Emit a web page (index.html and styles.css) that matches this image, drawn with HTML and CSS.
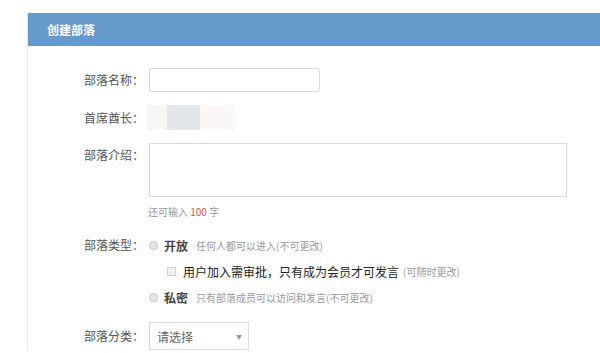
FILE: index.html
```html
<!DOCTYPE html>
<html lang="zh-CN">
<head>
    <meta charset="UTF-8">
    <meta name="viewport" content="width=device-width, initial-scale=1.0">
    <title>创建部落</title>
    <link rel="stylesheet" href="styles.css">
</head>
<body>
    <div class="panel">
        <div class="panel-head">创建部落</div>

        <div class="panel-body">
            <div class="form-row">
                <label class="form-label" for="name">部落名称：</label>
                <input type="text" id="name" class="text-input">
            </div>

            <div class="form-row row-chief">
                <span class="form-label">首席酋长：</span>
                <div class="chief">
                    <span class="chief-avatar"></span>
                </div>
            </div>

            <div class="form-row row-top row-intro">
                <label class="form-label" for="intro">部落介绍：</label>
                <textarea id="intro" class="text-area"></textarea>
            </div>
            <div class="counter">还可输入 <em>100</em> 字</div>

            <div class="form-row row-top row-type">
                <span class="form-label tall">部落类型：</span>
                <div class="options">
                    <div class="option">
                        <span class="radio"></span>
                        <b>开放</b>
                        <span class="hint">任何人都可以进入(不可更改)</span>
                    </div>
                    <div class="option sub-option">
                        <span class="checkbox"></span>
                        <span class="strong">用户加入需审批，只有成为会员才可发言</span>
                        <span class="hint">(可随时更改)</span>
                    </div>
                    <div class="option">
                        <span class="radio"></span>
                        <b>私密</b>
                        <span class="hint">只有部落成员可以访问和发言(不可更改)</span>
                    </div>
                </div>
            </div>

            <div class="form-row row-category">
                <span class="form-label">部落分类：</span>
                <div class="select">
                    <span>请选择</span>
                    <span class="arrow">▼</span>
                </div>
            </div>
        </div>
    </div>
</body>
</html>
```

FILE: styles.css
```css
body {
    margin: 0;
    background-color: #fff;
    font-family: "Noto Sans CJK SC", "Noto Sans", sans-serif;
    font-size: 12px;
    color: #555;
    overflow: hidden;
}

.panel {
    margin: 13px 0 0 27px;
    border-left: 1px solid #e8e8e8;
}

.panel-head {
    height: 33px;
    line-height: 33px;
    padding-left: 19px;
    background-color: #6699cc;
    color: #fff;
    font-weight: bold;
    font-size: 12px;
}

.panel-body {
    padding-top: 22px;
}

.form-row {
    display: flex;
    align-items: center;
}

.row-top {
    align-items: flex-start;
}

.form-label {
    width: 116px;
    margin-right: 5px;
    text-align: right;
    line-height: 24px;
    color: #555;
    flex-shrink: 0;
}

.form-label.tall {
    line-height: 26px;
}

.text-input {
    width: 171px;
    height: 24px;
    box-sizing: border-box;
    border: 1px solid #dcdcdc;
    border-radius: 2px;
    margin: 0;
    padding: 0 6px;
}

.row-chief {
    margin-top: 13px;
}

.chief {
    display: flex;
    width: 88px;
    height: 25px;
    margin-left: -2px;
    background: linear-gradient(to right, #f7f7f7 0, #f7f7f7 20px, transparent 20px, transparent 53px, #fcf6f6 53px);
}

.chief-avatar {
    width: 33px;
    height: 25px;
    margin-left: 20px;
    background-color: #e3e7eb;
}

.row-intro {
    margin-top: 13px;
}

.text-area {
    width: 418px;
    height: 54px;
    box-sizing: border-box;
    border: 1px solid #dcdcdc;
    margin: 0;
    padding: 4px 6px;
    resize: none;
    font-family: inherit;
}

.counter {
    margin: 8px 0 0 120px;
    font-size: 10px;
    line-height: 14px;
    color: #999;
}

.counter em {
    font-style: normal;
    color: #d9534f;
}

.row-type {
    margin-top: 13px;
}

.option {
    display: flex;
    align-items: center;
    height: 26px;
}

.sub-option {
    padding-left: 18px;
}

.radio {
    width: 7px;
    height: 7px;
    border: 1px solid #c6c6c6;
    border-radius: 50%;
    background-color: #e4e4e4;
    margin-right: 6px;
}

.checkbox {
    width: 7px;
    height: 7px;
    border: 1px solid #d0d0d0;
    background-color: #f0f0f0;
    margin-right: 7px;
}

.option b {
    color: #444;
    font-size: 12px;
    font-weight: 600;
    margin-right: 8px;
}

.strong {
    color: #222;
    font-size: 12px;
    margin-right: 4px;
}

.hint {
    color: #999;
    font-size: 10px;
}

.row-category {
    margin-top: 12px;
}

.select {
    display: flex;
    justify-content: space-between;
    align-items: center;
    width: 100px;
    height: 28px;
    box-sizing: border-box;
    border: 1px solid #dcdcdc;
    padding: 0 6px 0 7px;
    color: #666;
}

.arrow {
    font-size: 6px;
    color: #999;
}
```
